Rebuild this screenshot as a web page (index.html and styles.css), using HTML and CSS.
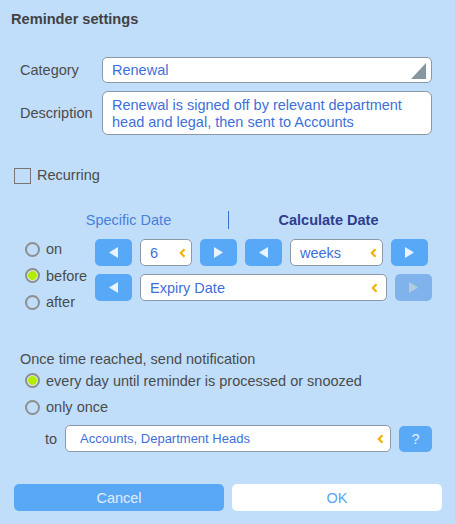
FILE: index.html
```html
<!DOCTYPE html>
<html>
<head>
<meta charset="utf-8">
<title>Reminder settings</title>
<link rel="stylesheet" href="styles.css">
</head>
<body>
<div class="dialog">
  <div class="title">Reminder settings</div>

  <div class="field field-category">
    <span class="field-label">Category</span>
    <div class="select">
      <span>Renewal</span>
      <svg class="corner" width="15" height="16" viewBox="0 0 15 16"><polygon points="15,0 15,16 0,16" fill="#8797a2"/></svg>
    </div>
  </div>

  <div class="field field-desc">
    <span class="field-label">Description</span>
    <div class="textarea">Renewal is signed off by relevant department head and legal, then sent to Accounts</div>
  </div>

  <div class="check-row"><span class="checkbox"></span><span>Recurring</span></div>

  <div class="tabs">
    <span class="tab tab-specific">Specific Date</span>
    <span class="tab-sep"></span>
    <span class="tab tab-calc">Calculate Date</span>
  </div>

  <div class="calc">
    <div class="radios">
      <div class="radio-row"><span class="radio"></span>on</div>
      <div class="radio-row"><span class="radio checked"></span>before</div>
      <div class="radio-row"><span class="radio"></span>after</div>
    </div>
    <div class="controls">
      <div class="ctrl-row">
        <button class="btn-arrow"><svg width="9" height="11" viewBox="0 0 9 11"><polygon points="0,5.5 9,0 9,11"/></svg></button>
        <div class="combo w-num"><span>6</span><svg class="chev" width="7" height="10" viewBox="0 0 7 10"><polyline points="5.5,1.2 1.8,5 5.5,8.8"/></svg></div>
        <button class="btn-arrow"><svg width="9" height="11" viewBox="0 0 9 11"><polygon points="0,0 9,5.5 0,11"/></svg></button>
        <button class="btn-arrow"><svg width="9" height="11" viewBox="0 0 9 11"><polygon points="0,5.5 9,0 9,11"/></svg></button>
        <div class="combo w-unit"><span>weeks</span><svg class="chev" width="7" height="10" viewBox="0 0 7 10"><polyline points="5.5,1.2 1.8,5 5.5,8.8"/></svg></div>
        <button class="btn-arrow"><svg width="9" height="11" viewBox="0 0 9 11"><polygon points="0,0 9,5.5 0,11"/></svg></button>
      </div>
      <div class="ctrl-row">
        <button class="btn-arrow"><svg width="9" height="11" viewBox="0 0 9 11"><polygon points="0,5.5 9,0 9,11"/></svg></button>
        <div class="combo w-date"><span>Expiry Date</span><svg class="chev" width="7" height="10" viewBox="0 0 7 10"><polyline points="5.5,1.2 1.8,5 5.5,8.8"/></svg></div>
        <button class="btn-arrow disabled"><svg width="9" height="11" viewBox="0 0 9 11"><polygon points="0,0 9,5.5 0,11"/></svg></button>
      </div>
    </div>
  </div>

  <div class="notify">
    <div class="notify-title">Once time reached, send notification</div>
    <div class="radio-row"><span class="radio checked"></span>every day until reminder is processed or snoozed</div>
    <div class="radio-row"><span class="radio"></span>only once</div>
    <div class="to-row">
      <span class="to-label">to</span>
      <div class="combo recipients"><span>Accounts, Department Heads</span><svg class="chev" width="7" height="10" viewBox="0 0 7 10"><polyline points="5.5,1.2 1.8,5 5.5,8.8"/></svg></div>
      <button class="btn-help">?</button>
    </div>
  </div>

  <div class="footer">
    <button class="btn-cancel">Cancel</button>
    <button class="btn-ok">OK</button>
  </div>
</div>
</body>
</html>
```

FILE: styles.css
```css
body {
  margin: 0;
  background: #c0defa;
  font-family: "Liberation Sans", Arial, sans-serif;
  font-size: 14.5px;
  color: #4b4b4b;
}

button {
  border: 0;
  padding: 0;
  margin: 0;
  font: inherit;
  cursor: pointer;
}

.dialog {
  width: 455px;
  height: 524px;
  box-sizing: border-box;
  padding-top: 11px;
}

.title {
  margin-left: 11px;
  font-weight: bold;
  font-size: 14.6px;
  line-height: 17px;
  color: #424242;
}

.field {
  display: flex;
  align-items: center;
  margin-left: 20px;
}

.field-category { margin-top: 29px; }
.field-desc { margin-top: 8px; }

.field-label { width: 82px; }

.select {
  width: 330px;
  height: 26px;
  box-sizing: border-box;
  border: 1px solid #8a99a4;
  border-radius: 5px;
  background: #fff;
  display: flex;
  align-items: center;
  justify-content: space-between;
  padding: 0 5px 0 9px;
  color: #3d70da;
}

.corner {
  align-self: flex-end;
  margin-bottom: 3px;
}

.textarea {
  width: 330px;
  height: 44px;
  box-sizing: border-box;
  border: 1px solid #8a99a4;
  border-radius: 6px;
  background: #fff;
  padding: 5px 9px 0;
  line-height: 16.5px;
  color: #3d70da;
}

.check-row {
  display: flex;
  align-items: center;
  margin: 32px 0 0 14px;
  height: 17px;
  line-height: 17px;
}

.checkbox {
  width: 17px;
  height: 16px;
  box-sizing: border-box;
  border: 1px solid #767676;
  margin-right: 6px;
}

.tabs {
  display: flex;
  align-items: center;
  margin: 27px 0 0 29px;
  width: 399px;
  line-height: 18px;
}

.tab {
  flex: 1;
  text-align: center;
}

.tab-specific { color: #4a7fdb; }

.tab-sep {
  width: 1px;
  height: 18px;
  background: #3b6fd6;
}

.tab-calc {
  font-weight: bold;
  color: #2f3c8e;
}

.calc {
  display: flex;
  align-items: flex-start;
  margin-top: 10px;
}

.radios {
  width: 70px;
  margin: -3px 0 0 25px;
}

.radio-row {
  display: flex;
  align-items: center;
  height: 26.5px;
}

.radio {
  width: 15px;
  height: 15px;
  box-sizing: border-box;
  border: 2px solid #8e8e8e;
  border-radius: 50%;
  margin-right: 6px;
  flex: none;
}

.radio.checked {
  background: radial-gradient(circle, #b3ee00 0 4px, #d6e6ea 4.7px);
}

.controls {
  display: flex;
  flex-direction: column;
  gap: 8px;
}

.ctrl-row {
  display: flex;
  gap: 8px;
  height: 27px;
}

.btn-arrow {
  width: 37px;
  height: 27px;
  border-radius: 5px;
  background: #57a8f6;
  display: flex;
  align-items: center;
  justify-content: center;
  fill: #e9f3fd;
}

.btn-arrow.disabled {
  background: #80b3ec;
  fill: #b5cbe0;
}

.combo {
  box-sizing: border-box;
  height: 27px;
  border: 1px solid #8a99a4;
  border-radius: 5px;
  background: #fff;
  display: flex;
  align-items: center;
  justify-content: space-between;
  padding: 0 5px 0 9px;
  color: #3d70da;
}

.chev {
  fill: none;
  stroke: #f2b200;
  stroke-width: 2.2;
  flex: none;
}

.w-num { width: 52px; }
.w-unit { width: 93px; }
.w-date { width: 247px; padding-right: 8px; }

.notify { margin-top: 35px; }

.notify-title {
  margin-left: 20px;
  line-height: 17px;
}

.notify .radio-row { margin-left: 25px; }

.to-row {
  display: flex;
  align-items: center;
  gap: 8px;
  margin: 4.5px 0 0 45px;
}

.recipients {
  width: 326px;
  font-size: 13px;
  padding-left: 14px;
  padding-right: 6px;
}

.btn-help {
  width: 33px;
  height: 26px;
  border-radius: 5px;
  background: #59a9f7;
  color: #e3effc;
  font-size: 14.5px;
}

.footer {
  display: flex;
  gap: 8px;
  margin: 32px 0 0 14px;
}

.btn-cancel,
.btn-ok {
  width: 210px;
  height: 27px;
  border-radius: 5px;
  font-size: 14.5px;
}

.btn-cancel {
  background: #58a8f6;
  color: #e0eefc;
}

.btn-ok {
  background: #fff;
  color: #59a5f4;
}
```
